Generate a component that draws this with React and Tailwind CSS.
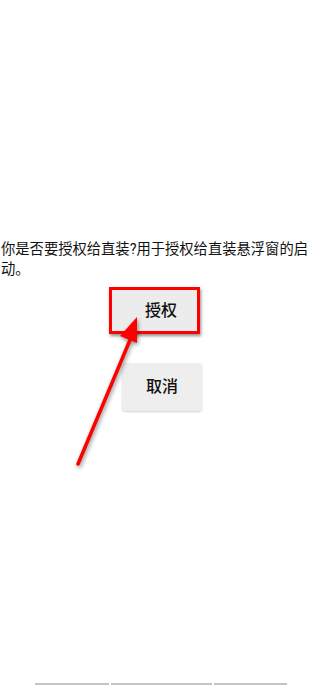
export default function App() {
  const font = { fontFamily: 'Roboto, "Noto Sans CJK SC", sans-serif' };

  return (
    <div className="relative flex h-[685px] w-[320px] flex-col overflow-hidden bg-white text-[#111111]" style={font}>
      <p className="mt-[240px] w-[312px] pl-[1px] text-[14.3px] leading-[19.5px]">
        你是否要授权给直装?用于授权给直装悬浮窗的启动。
      </p>

      <div className="mt-[8px] flex flex-col">
        <button
          type="button"
          className="ml-[109px] flex h-[47px] w-[91px] items-center justify-center border-[3.5px] border-[#ff0000] bg-[#ececec] pl-[13px] text-[16px] font-medium shadow-[1px_2px_3px_rgba(0,0,0,0.45)]"
        >
          授权
        </button>
        <button
          type="button"
          className="ml-[122px] mt-[29px] flex h-[48px] w-[80px] items-center justify-center rounded-[4px] bg-[#eeeeee] text-[16px] font-medium shadow-[0_1px_2px_rgba(0,0,0,0.18)]"
        >
          取消
        </button>
      </div>

      <div className="mt-auto flex h-[2px] gap-[2px] pl-[35px]">
        <div className="w-[74px] bg-[#c4c4c4]" />
        <div className="w-[101px] bg-[#c4c4c4]" />
        <div className="w-[73px] bg-[#c4c4c4]" />
      </div>

      {/* annotation arrow drawn over the screenshot */}
      <svg
        className="pointer-events-none absolute left-0 top-0 drop-shadow-[1px_2px_2px_rgba(0,0,0,0.45)]"
        width="320"
        height="685"
        viewBox="0 0 320 685"
      >
        <line x1="78" y1="464" x2="130" y2="340" stroke="#ff0000" strokeWidth="3.5" strokeLinecap="round" />
        <polygon points="137,317 137,343 120,336" fill="#ff0000" />
      </svg>
    </div>
  );
}
